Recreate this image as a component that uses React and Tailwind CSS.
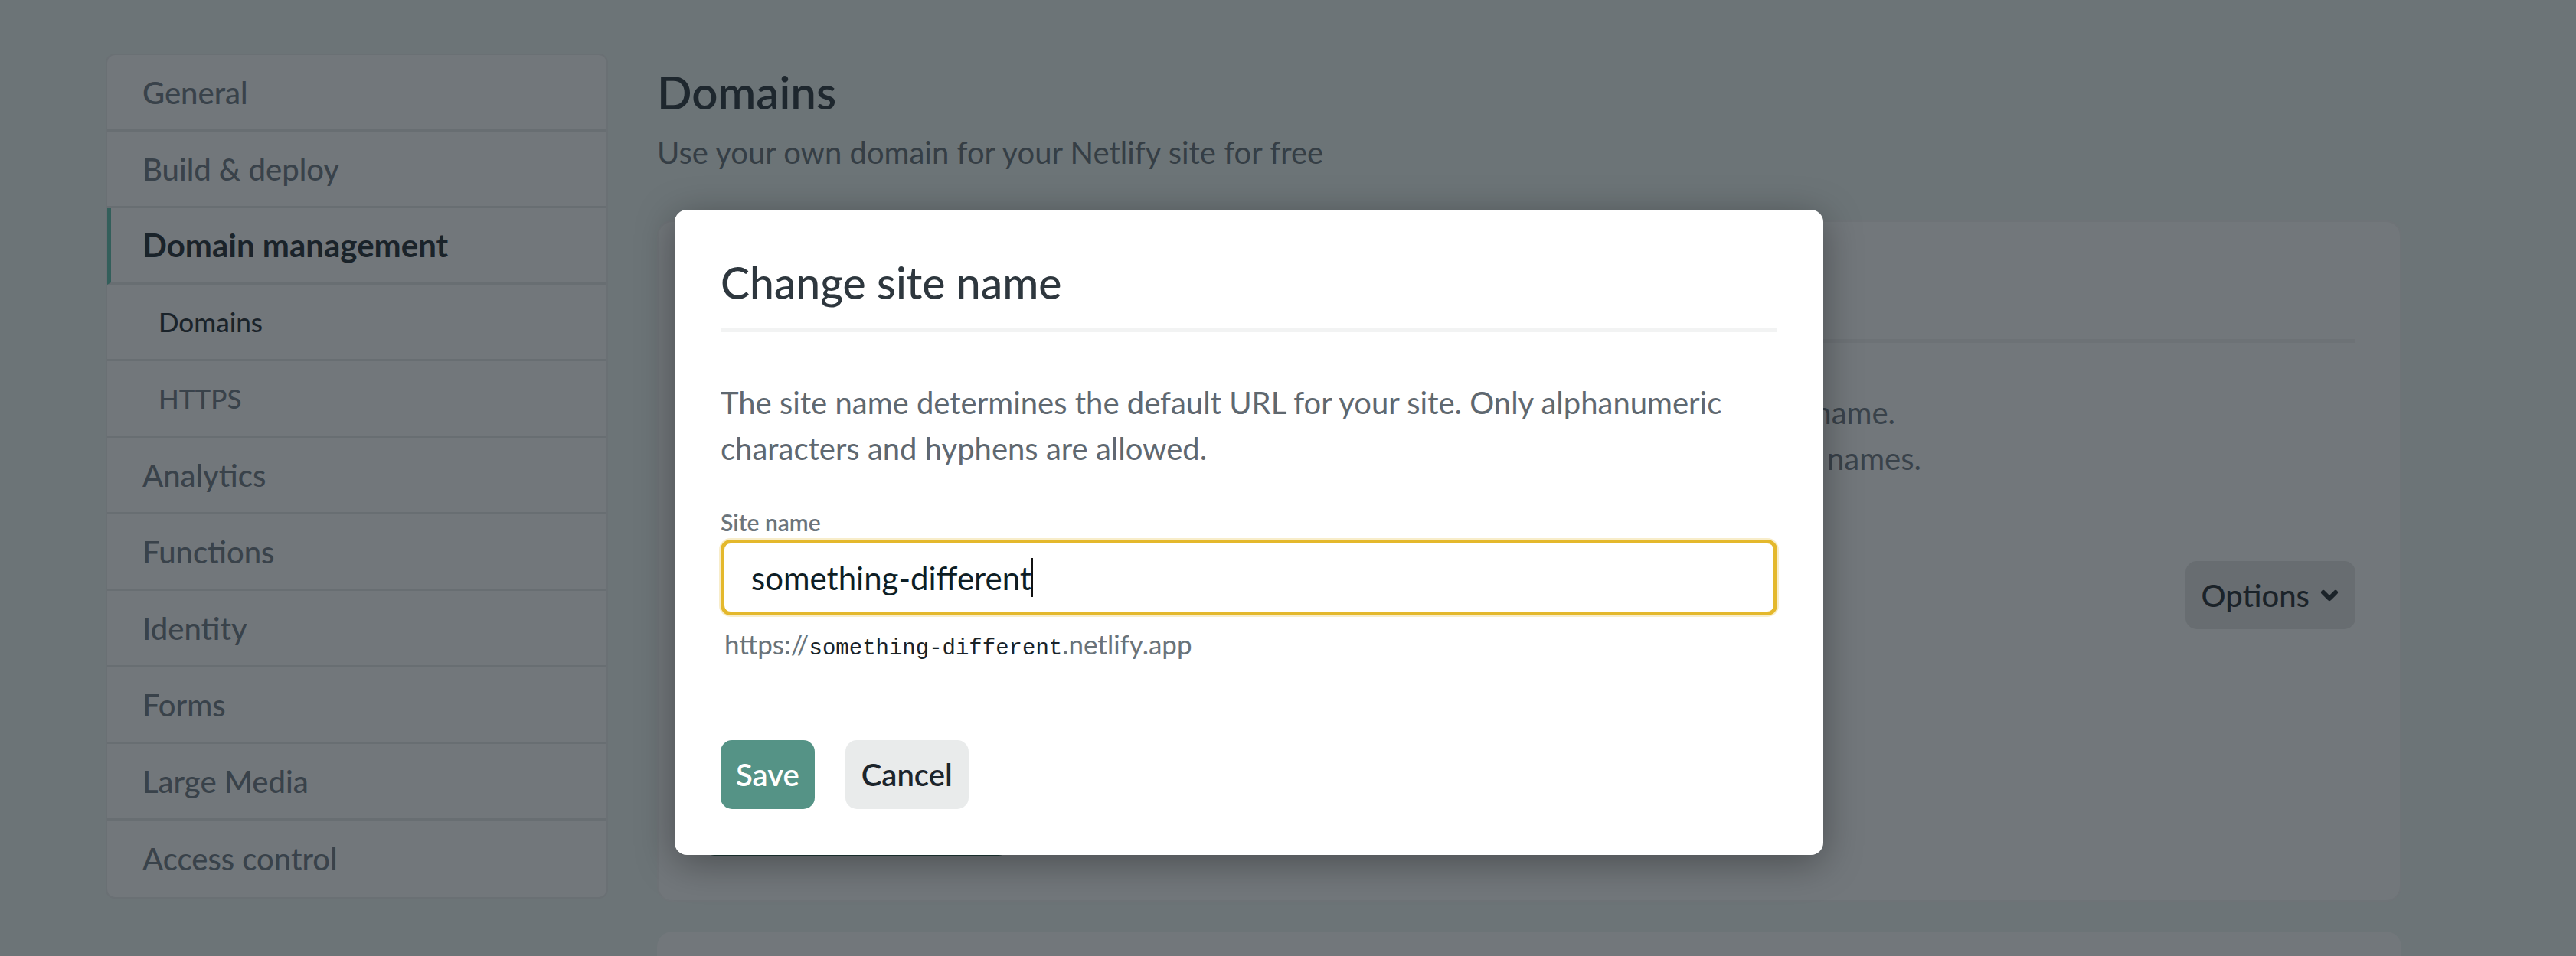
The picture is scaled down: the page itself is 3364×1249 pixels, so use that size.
import React from "react";

const NAV = [
  { label: "General", kind: "main" },
  { label: "Build & deploy", kind: "main" },
  { label: "Domain management", kind: "active" },
  { label: "Domains", kind: "subActive" },
  { label: "HTTPS", kind: "sub" },
  { label: "Analytics", kind: "main" },
  { label: "Functions", kind: "main" },
  { label: "Identity", kind: "main" },
  { label: "Forms", kind: "main" },
  { label: "Large Media", kind: "main" },
  { label: "Access control", kind: "main" },
];

function NavRow({ item, last }) {
  const base =
    "flex h-[100px] items-center " + (last ? "" : "border-b-[3px] border-[#686e72] ");
  if (item.kind === "active") {
    return (
      <div className={base + "border-l-[5px] border-l-[#335f5b] pl-[41px] text-[42px] font-bold text-[#1a232a]"}>
        {item.label}
      </div>
    );
  }
  if (item.kind === "subActive") {
    return <div className={base + "pl-[67px] text-[35px] font-medium text-[#1a232a]"}>{item.label}</div>;
  }
  if (item.kind === "sub") {
    return <div className={base + "pl-[67px] text-[35px] font-medium text-[#39424a]"}>{item.label}</div>;
  }
  return <div className={base + "pl-[46px] text-[40px] font-medium text-[#39424a]"}>{item.label}</div>;
}

function Chevron() {
  return (
    <svg width="24" height="16" viewBox="0 0 24 16" className="ml-[14px]">
      <path d="M4 4 L12 12 L20 4" fill="none" stroke="#1b2329" strokeWidth="6" strokeLinecap="round" strokeLinejoin="round" />
    </svg>
  );
}

export default function App() {
  return (
    <div className="relative h-[1249px] w-[3364px] overflow-hidden bg-[#6c7477] [font-family:Lato,sans-serif]">
      <div className="flex items-start gap-[64px] pl-[138px] pt-[70px]">
        <aside className="w-[656px] shrink-0 overflow-hidden rounded-[12px] border-2 border-[#6a7074] bg-[#72777b]">
          {NAV.map((item, i) => (
            <NavRow key={item.label} item={item} last={i === NAV.length - 1} />
          ))}
        </aside>

        <main className="w-[2278px] shrink-0 pt-[13px]">
          <h1 className="text-[60px] font-semibold leading-[75px] text-[#1e272e]">Domains</h1>
          <p className="mt-[11px] text-[40px] leading-[60px] text-[#353e45]">
            Use your own domain for your Netlify site for free
          </p>

          <section className="mt-[59px] rounded-[20px] border-2 border-[#6e7377] bg-[#72777b] px-[58px] pb-[58px]">
            <div className="flex h-[153px] items-center">
              <h2 className="text-[48px] font-semibold text-[#1e272e]">Custom domains</h2>
            </div>
            <div className="h-[5px] bg-[#6d7276]" />
            <div className="pt-[61px] text-[40px] leading-[60px] text-[#39424a]">
              <div className="w-[1557px] whitespace-nowrap [text-align-last:justify]">
                By default, your site is always accessible via a subdomain based on the site name.
              </div>
              <div className="w-[1591px] whitespace-nowrap [text-align-last:justify]">
                Custom domains allow you to access your site via one or more non-Netlify domain names.
              </div>
            </div>
            <div className="mt-[104px] flex h-[89px] items-center justify-between">
              <div className="text-[40px] font-semibold text-[#1e272e]">something-different.netlify.app</div>
              <button className="flex h-[89px] items-center rounded-[15px] bg-[#686d71] pl-[21px] pr-[22px] text-[40px] font-medium text-[#1b2329]">
                Options
                <Chevron />
              </button>
            </div>
            <div className="mt-[206px]">
              <button className="h-[90px] rounded-[15px] bg-[#1f3a38] px-[24px] text-[40px] font-semibold text-[#72777b]">
                Add custom domain
              </button>
            </div>
          </section>

          <section className="mt-[39px] h-[200px] rounded-[20px] bg-[#72777b]" />
        </main>
      </div>

      <div className="absolute left-[881px] top-[274px] w-[1500px] rounded-[16px] bg-white px-[60px] pb-[60px] pt-[58px] shadow-[0_10px_50px_rgba(0,0,0,0.35)]">
        <h2 className="text-[57px] font-medium leading-[75px] text-[#2e373e]">Change site name</h2>
        <div className="mt-[22px] h-[5px] bg-[#f2f3f3]" />
        <p className="mt-[62px] text-[40px] leading-[60px] text-[#5f6870]">
          The site name determines the default URL for your site. Only alphanumeric
          <br />
          characters and hyphens are allowed.
        </p>
        <label className="mt-[48px] block text-[30px] font-semibold leading-[36px] text-[#6c757c]">Site name</label>
        <div className="mt-[5px] flex h-[99px] items-center rounded-[13px] border-[5px] border-[#e4b82c] px-[35px] shadow-[0_0_0_2px_rgba(228,184,44,0.25)]">
          <span className="text-[42px] leading-[50px] text-[#0e1e25]">something-different</span>
          <span className="inline-block h-[51px] w-[2px] bg-[#111111]" />
        </div>
        <div className="mt-[15px] pl-[5px] text-[35px] leading-[44px] text-[#69737a]">
          https://
          <span className="text-[29px] text-[#1a2329] [font-family:Liberation_Mono,monospace]">something-different</span>
          .netlify.app
        </div>
        <div className="mt-[97px] flex gap-[40px]">
          <button className="h-[90px] rounded-[15px] bg-[#559386] px-[20px] text-[40px] font-semibold text-white">
            Save
          </button>
          <button className="h-[90px] rounded-[15px] bg-[#e9ebeb] px-[21px] text-[40px] font-semibold text-[#1c252c]">
            Cancel
          </button>
        </div>
      </div>
    </div>
  );
}
